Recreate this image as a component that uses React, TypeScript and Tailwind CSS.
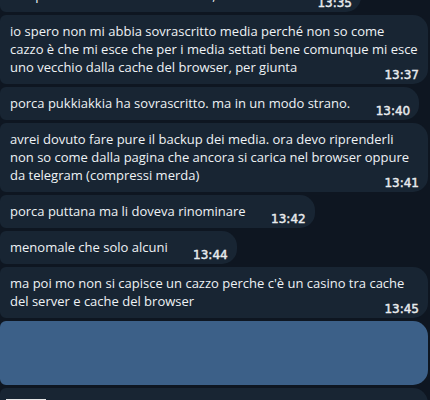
import React from 'react';

type Msg = {
  lines: string[];
  time: string;
  wide?: boolean;
};

const messages: Msg[] = [
  {
    lines: ['io spero non mi abbia sovrascritto media perché non so come', 'cazzo è che mi esce che per i media settati bene comunque mi esce', 'uno vecchio dalla cache del browser, per giunta'],
    time: '13:37',
    wide: true,
  },
  { lines: ['porca pukkiakkia ha sovrascritto. ma in un modo strano.'], time: '13:40' },
  {
    lines: ['avrei dovuto fare pure il backup dei media. ora devo riprenderli', 'non so come dalla pagina che ancora si carica nel browser oppure', 'da telegram (compressi merda)'],
    time: '13:41',
    wide: true,
  },
  { lines: ['porca puttana ma li doveva rinominare'], time: '13:42' },
  { lines: ['menomale che solo alcuni'], time: '13:44' },
  {
    lines: ['ma poi mo non si capisce un cazzo perche c\'è un casino tra cache', 'del server e cache del browser'],
    time: '13:45',
    wide: true,
  },
];

function Bubble({ msg }: { msg: Msg }) {
  return (
    <div
      className={`relative bg-[#182533] rounded-l-[6px] rounded-r-[15px] pl-[10px] pr-[10px] pt-[7px] pb-[8px] text-[13px] leading-[18px] text-[#eef2f5] whitespace-nowrap ${
        msg.wide ? 'w-[428px]' : 'w-fit'
      }`}
      style={{ fontFamily: '"Open Sans", sans-serif' }}
    >
      {msg.lines.map((line, i) => (
        <div key={i}>
          {line}
          {i === msg.lines.length - 1 && <span className="inline-block w-[59px]" />}
        </div>
      ))}
      <span
        className="absolute right-[9px] bottom-[3px] text-[12px] leading-none text-[#e8ebee] [-webkit-text-stroke:0.45px_#e8ebee]"
        style={{ fontFamily: '"DejaVu Sans", sans-serif' }}
      >
        {msg.time}
      </span>
    </div>
  );
}

export default function App() {
  return (
    <div className="h-[400px] w-[430px] overflow-hidden bg-[#0e1621]">
      <div className="flex flex-col items-start gap-[3px] -mt-[21px]">
        <Bubble msg={{ lines: ['Leo post finiti i media a mano mo, è realmente'], time: '13:35' }} />
        {messages.map((m) => (
          <Bubble key={m.time} msg={m} />
        ))}
        <div className="w-[428px] h-[64px] bg-[#3c6088] rounded-l-[6px] rounded-r-[15px]" />
        <div className="w-[428px] h-[40px] bg-[#182533] rounded-l-[6px] rounded-r-[15px] pt-[11px] pl-[6px]">
          <div className="w-[40px] h-[10px] bg-[#e8e8e8]" />
        </div>
      </div>
    </div>
  );
}
